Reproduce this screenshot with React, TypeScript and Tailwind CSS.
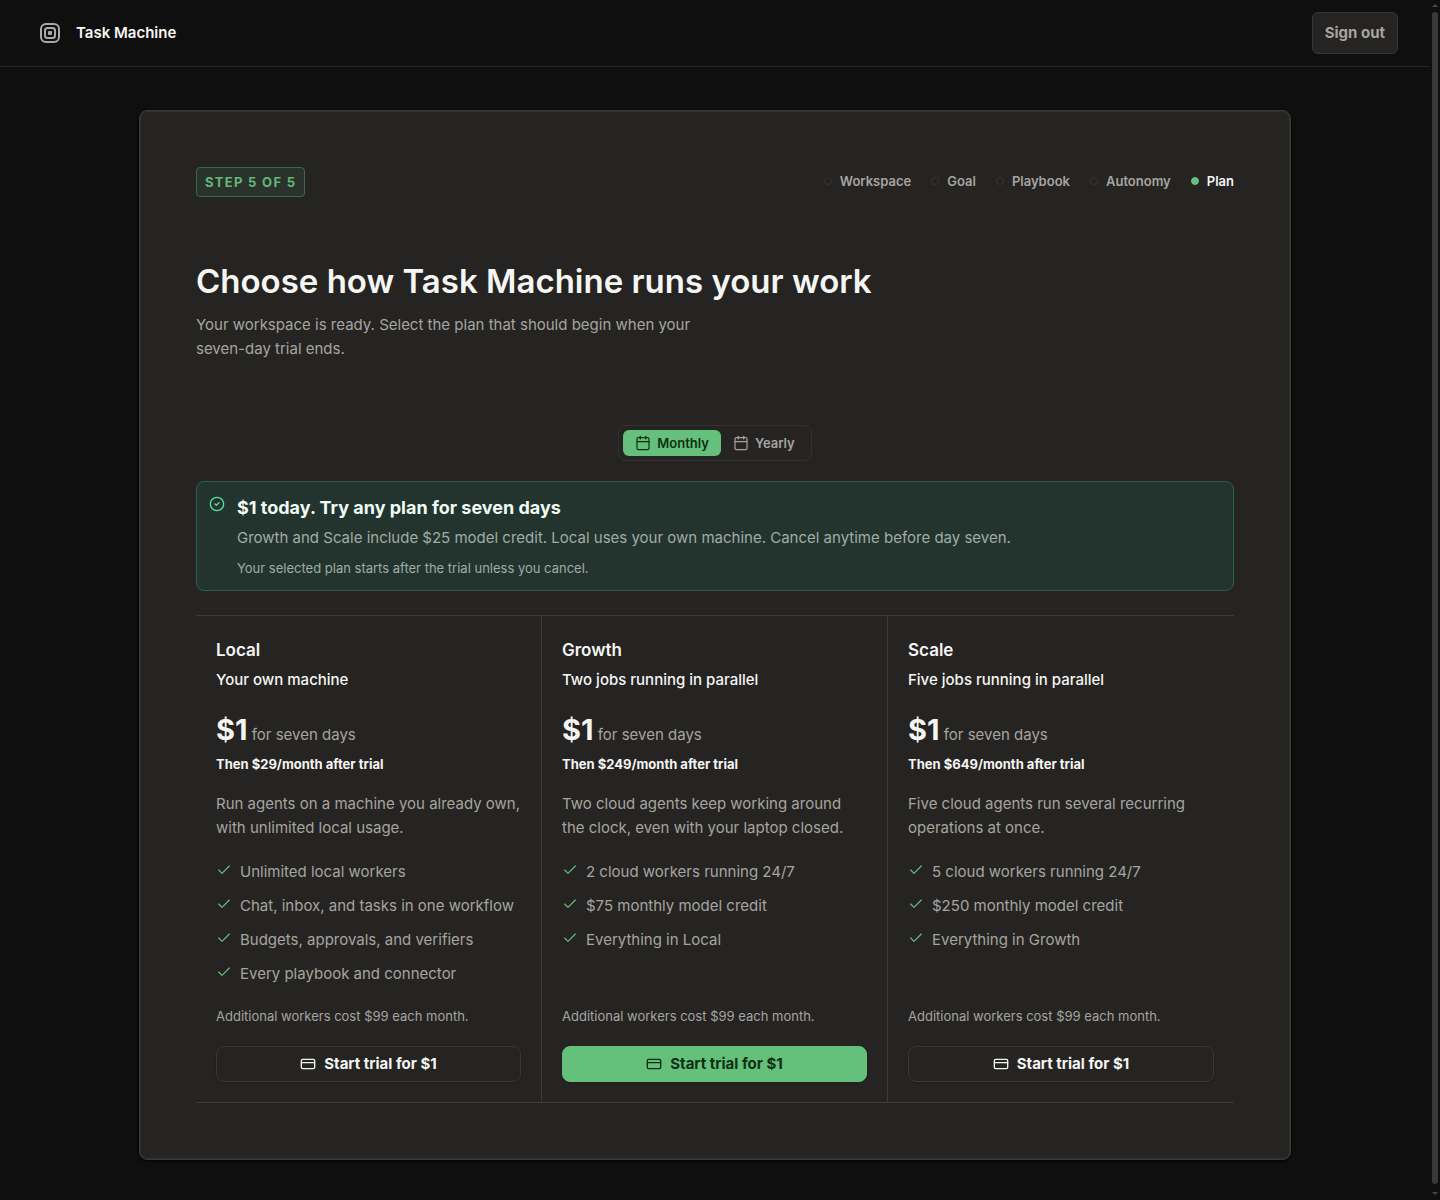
import { useState } from "react";
import clsx from "clsx";
import { Calendar, Check, CircleCheck, CreditCard } from "lucide-react";

const steps = ["Workspace", "Goal", "Playbook", "Autonomy", "Plan"];

const plans = [
  {
    name: "Local",
    tagline: "Your own machine",
    monthly: "$29/month",
    yearly: "$290/year",
    description: "Run agents on a machine you already own, with unlimited local usage.",
    features: [
      "Unlimited local workers",
      "Chat, inbox, and tasks in one workflow",
      "Budgets, approvals, and verifiers",
      "Every playbook and connector",
    ],
  },
  {
    name: "Growth",
    tagline: "Two jobs running in parallel",
    monthly: "$249/month",
    yearly: "$2,490/year",
    description: "Two cloud agents keep working around the clock, even with your laptop closed.",
    features: ["2 cloud workers running 24/7", "$75 monthly model credit", "Everything in Local"],
    featured: true,
  },
  {
    name: "Scale",
    tagline: "Five jobs running in parallel",
    monthly: "$649/month",
    yearly: "$6,490/year",
    description: "Five cloud agents run several recurring operations at once.",
    features: ["5 cloud workers running 24/7", "$250 monthly model credit", "Everything in Growth"],
  },
];

type Plan = (typeof plans)[number];
type Billing = "monthly" | "yearly";

export default function App() {
  const [billing, setBilling] = useState<Billing>("monthly");

  return (
    <div className="flex min-h-screen bg-[#0f0f0f] font-['Inter',sans-serif] text-[15px] leading-6 text-[#a5a4a0]">
      <div className="min-w-0 flex-1">
        <Header />
        <main className="px-6 pt-[43px] pb-10">
          <section className="mx-auto max-w-6xl rounded-lg border border-[#393936] bg-[#252422] p-14 shadow-[inset_0_0_0_1px_#31312e,0_1px_3px_#000]">
            <div className="flex items-start justify-between">
              <span className="rounded-sm border border-[#35694a] bg-[#29332b] px-2 text-[13px] leading-7 font-bold tracking-widest text-[#66b67a]">
                STEP 5 OF 5
              </span>
              <Stepper />
            </div>

            <h1 className="mt-[60px] text-[33px] leading-12 font-semibold text-[#f5f5f3]">
              Choose how Task Machine runs your work
            </h1>
            <p className="mt-2 max-w-[520px]">
              Your workspace is ready. Select the plan that should begin when your seven-day trial ends.
            </p>

            <div className="mt-16 flex justify-center">
              <div className="flex rounded-lg border border-[#32322f] p-1">
                <BillingButton label="Monthly" active={billing === "monthly"} onClick={() => setBilling("monthly")} />
                <BillingButton label="Yearly" active={billing === "yearly"} onClick={() => setBilling("yearly")} />
              </div>
            </div>

            <div className="mt-5 flex gap-3 rounded-lg border border-[#27604a] bg-[#23342e] px-3 py-3">
              <CircleCheck className="mt-[2px] size-4 shrink-0 text-[#5fdba5]" strokeWidth={2} />
              <div>
                <h2 className="text-lg leading-7 font-bold text-[#f0fbf5]">$1 today. Try any plan for seven days</h2>
                <p className="mt-1 text-[#a0aca5]">
                  Growth and Scale include $25 model credit. Local uses your own machine. Cancel anytime before day seven.
                </p>
                <p className="mt-2 text-[13px] leading-5 text-[#a0aca5]">
                  Your selected plan starts after the trial unless you cancel.
                </p>
              </div>
            </div>

            <div className="mt-6 grid grid-cols-3 divide-x divide-[#3a3a37] border-y border-[#3a3a37]">
              {plans.map((plan) => (
                <PlanColumn key={plan.name} plan={plan} billing={billing} />
              ))}
            </div>
          </section>
        </main>
      </div>
      <ScrollTrack />
    </div>
  );
}

function Header() {
  return (
    <header className="flex items-center justify-between border-b border-[#252523] py-3 pr-8 pl-10">
      <div className="flex items-center gap-4">
        <svg viewBox="0 0 20 20" className="size-5" fill="none" stroke="#a8a8a6" strokeWidth="2">
          <rect x="1" y="1" width="18" height="18" rx="5" />
          <rect x="5" y="5" width="10" height="10" rx="2.5" />
          <rect x="8" y="8" width="4" height="4" rx="1" fill="#a8a8a6" stroke="none" />
        </svg>
        <span className="font-semibold text-[#f5f5f3]">Task Machine</span>
      </div>
      <button className="rounded-md border border-[#353532] bg-[#252422] px-3 py-2 font-bold">Sign out</button>
    </header>
  );
}

function Stepper() {
  return (
    <ol className="flex gap-5 pt-0.5 text-[13px] font-semibold">
      {steps.map((step) => {
        const current = step === "Plan";
        return (
          <li key={step} className={clsx("flex items-center gap-2", current && "text-[#f5f5f3]")}>
            <span
              className={clsx("size-2 rounded-full border", current ? "border-[#64c07a] bg-[#64c07a]" : "border-[#353532]")}
            />
            {step}
          </li>
        );
      })}
    </ol>
  );
}

function BillingButton({ label, active, onClick }: { label: string; active: boolean; onClick: () => void }) {
  return (
    <button
      onClick={onClick}
      aria-pressed={active}
      className={clsx(
        "flex items-center gap-1.5 rounded-md px-3 text-[13px] leading-[26px] font-semibold",
        active && "bg-[#64c07a] text-[#0d2f12]"
      )}
    >
      <Calendar className="size-4" strokeWidth={1.75} />
      {label}
    </button>
  );
}

function PlanColumn({ plan, billing }: { plan: Plan; billing: Billing }) {
  return (
    <article className="flex flex-col p-5">
      <h3 className="text-[17px] leading-7 font-semibold text-[#f5f5f3]">{plan.name}</h3>
      <p className="mt-1 font-medium text-[#f5f5f3]">{plan.tagline}</p>
      <p className="mt-5">
        <span className="text-[29px] leading-9 font-bold text-[#f5f5f3]">$1</span> for seven days
      </p>
      <p className="mt-1 text-[13px] leading-6 font-bold text-[#f5f5f3]">Then {plan[billing]} after trial</p>
      <p className="mt-4">{plan.description}</p>
      <ul className="mt-5 mb-5 space-y-2.5">
        {plan.features.map((feature) => (
          <li key={feature} className="flex gap-2">
            <Check className="mt-[2px] size-4 shrink-0 text-[#64c07a]" strokeWidth={1.75} />
            {feature}
          </li>
        ))}
      </ul>
      <p className="mt-auto text-[13px] leading-5">Additional workers cost $99 each month.</p>
      <button
        className={clsx(
          "mt-5 flex h-9 items-center justify-center gap-2 rounded-lg border font-bold shadow-sm",
          plan.featured ? "border-[#64c07a] bg-[#64c07a] text-[#0d2f12]" : "border-[#373734] text-[#f5f5f3]"
        )}
      >
        <CreditCard className="size-4" strokeWidth={2} />
        Start trial for $1
      </button>
    </article>
  );
}

function ScrollTrack() {
  return (
    <div aria-hidden="true" className="flex w-2.5 flex-col items-center py-1">
      <svg viewBox="0 0 6 4" className="h-1 w-1.5 fill-[#484845]">
        <path d="M3 0 6 3H0z" />
      </svg>
      <div className="mt-1 mb-2 w-1.5 flex-1 rounded-sm bg-[#393936]" />
      <svg viewBox="0 0 6 4" className="h-1 w-1.5 fill-[#484845]">
        <path d="M0 0h6L3 3z" />
      </svg>
    </div>
  );
}
